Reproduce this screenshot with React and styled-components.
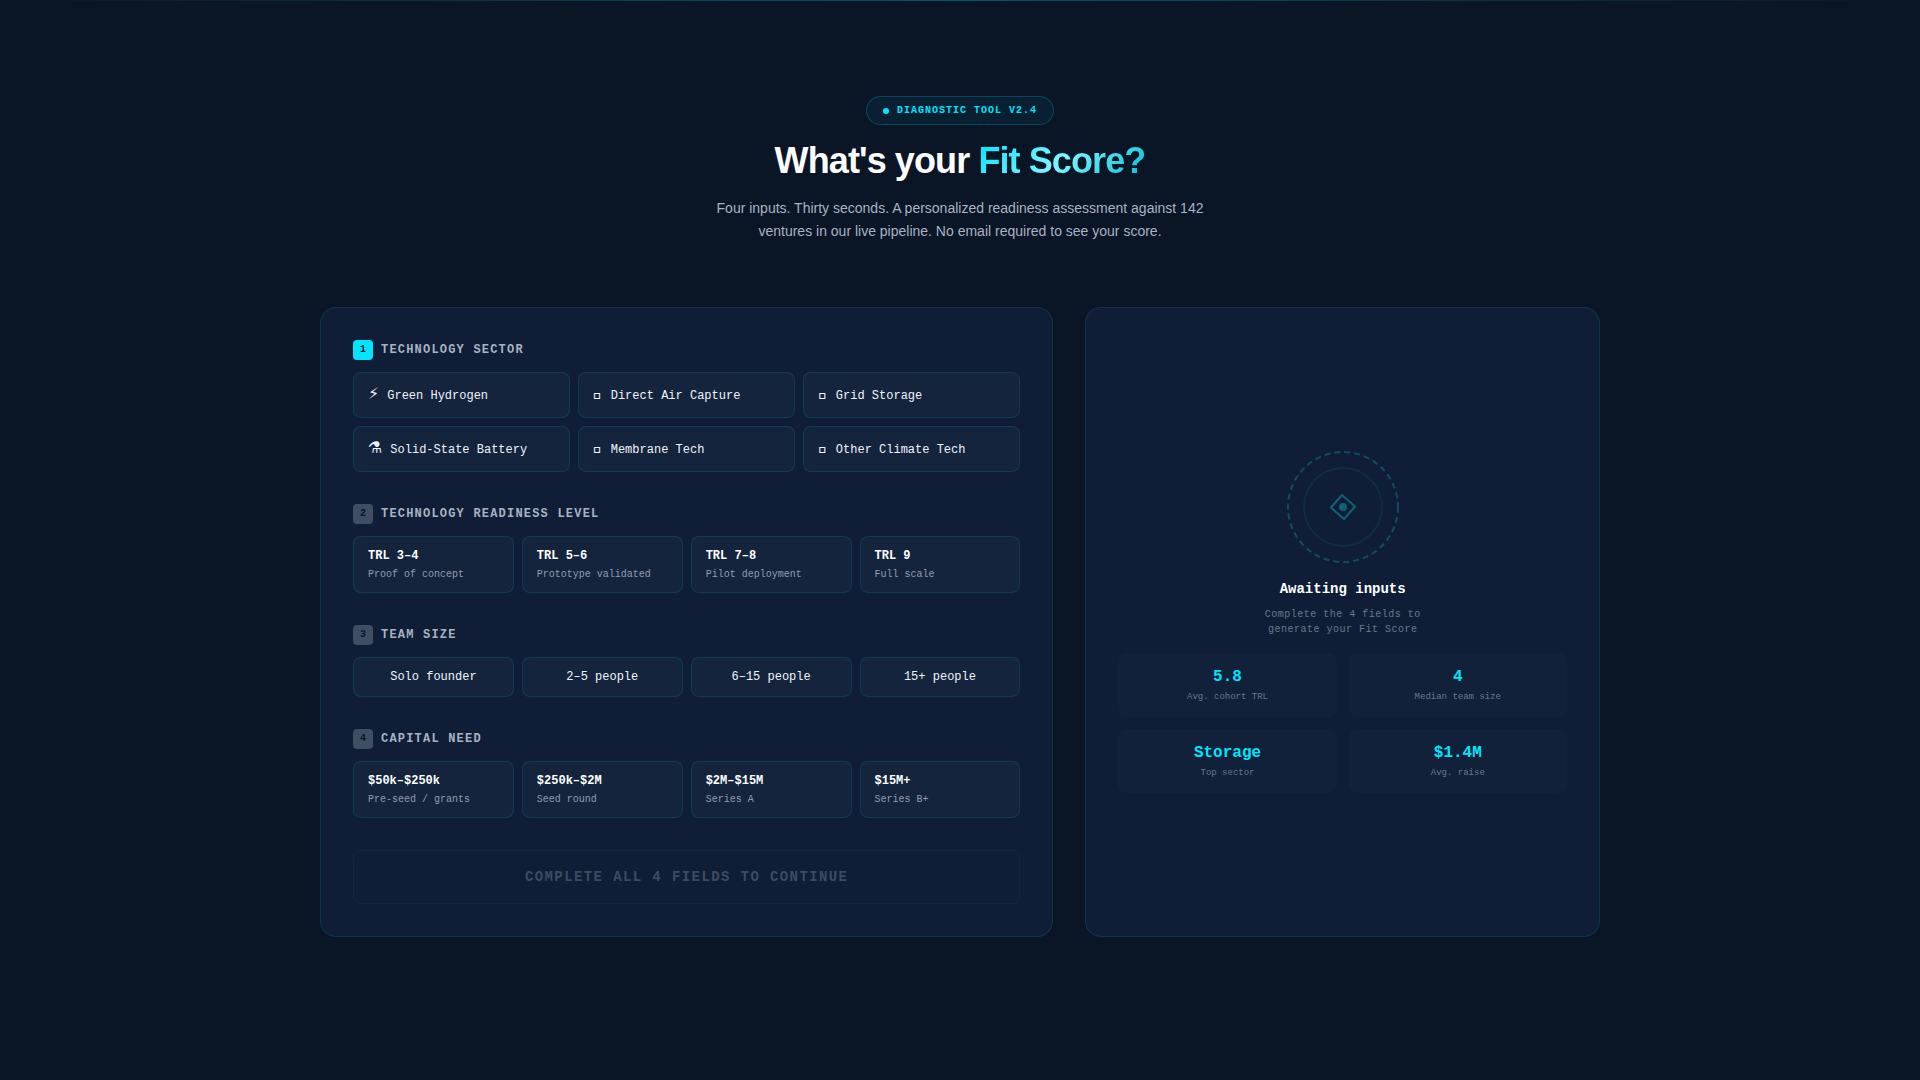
import React, { useState } from "react";
import styled, { createGlobalStyle, css } from "styled-components";

const mono = '"Liberation Mono", monospace';
const sans = '"Liberation Sans", sans-serif';
const symbols = '"Liberation Mono", "DejaVu Sans", sans-serif';

const GlobalStyle = createGlobalStyle`
  *, *::before, *::after { box-sizing: border-box; }
  body {
    margin: 0;
    background: #0a1526;
    color: #fff;
    font-family: ${sans};
  }
`;

const Page = styled.main`
  min-height: 100vh;
  padding: 0 24px 96px;
`;

const TopLine = styled.div`
  height: 1px;
  margin: 0 -24px 95px;
  background: linear-gradient(90deg, transparent, rgba(0, 229, 255, 0.3), transparent);
`;

const Header = styled.header`
  display: flex;
  flex-direction: column;
  align-items: center;
  text-align: center;
  margin-bottom: 64px;
`;

const Badge = styled.div`
  display: flex;
  align-items: center;
  gap: 8px;
  padding: 8px 16px;
  margin-bottom: 16px;
  border: 1px solid rgba(0, 229, 255, 0.2);
  border-radius: 20px;
  background: rgba(0, 229, 255, 0.06);
  color: #00e5ff;
  font: 700 10px/11px ${mono};
  letter-spacing: 0.1em;
  text-transform: uppercase;
`;

const Dot = styled.span`
  width: 6px;
  height: 6px;
  border-radius: 50%;
  background: #00e5ff;
`;

const Title = styled.h1`
  margin: 0 0 16px;
  font-size: 36px;
  line-height: 40px;
  font-weight: 700;
  letter-spacing: -0.025em;
`;

const Accent = styled.span`
  background: linear-gradient(135deg, #00e5ff 0%, #7ff5ff 50%, #00b8d4 100%);
  background-clip: text;
  color: transparent;
`;

const Lead = styled.p`
  margin: 0;
  max-width: 520px;
  font-size: 14px;
  line-height: 23px;
  color: #a8b3c2;
`;

const Columns = styled.div`
  display: grid;
  grid-template-columns: 1.425fr 1fr;
  gap: 32px;
  max-width: 1280px;
  margin: 0 auto;
`;

const panel = css`
  border: 1px solid rgba(0, 229, 255, 0.12);
  border-radius: 16px;
  padding: 32px;
  background: #0f1e36;
`;

const FormPanel = styled.form`
  ${panel}
  display: flex;
  flex-direction: column;
  gap: 32px;
`;

const ResultPanel = styled.section`
  ${panel}
  display: flex;
  flex-direction: column;
  align-items: center;
  justify-content: center;
  text-align: center;
  font-family: ${mono};
`;

const StepHead = styled.div`
  display: flex;
  align-items: center;
  gap: 8px;
  margin-bottom: 12px;
`;

const StepNumber = styled.span`
  width: 20px;
  height: 20px;
  border-radius: 4px;
  background: ${(p) => (p.$active ? "#00e5ff" : "#3f4e63")};
  color: #0a1628;
  font: 700 10px/20px ${mono};
  text-align: center;
`;

const StepLabel = styled.h2`
  margin: 0;
  font: 700 12px/20px ${mono};
  letter-spacing: 0.1em;
  text-transform: uppercase;
  color: #a8b3c2;
`;

const Options = styled.div`
  display: grid;
  grid-template-columns: repeat(${(p) => p.$columns}, minmax(0, 1fr));
  gap: 8px;
`;

const Option = styled.button`
  border: 1px solid ${(p) => (p.$selected ? "#00e5ff" : "rgba(0, 229, 255, 0.12)")};
  border-radius: 8px;
  background: #14243d;
  padding: 12px 14px;
  color: #f0f4fa;
  font: 400 12px/14px ${mono};
  text-align: ${(p) => (p.$center ? "center" : "left")};
  cursor: pointer;
`;

const OptionIcon = styled.span`
  margin-right: 8px;
  font-family: ${symbols};
  font-size: 16px;
  line-height: 20px;
`;

const OptionTitle = styled.span`
  display: block;
  margin-bottom: 6px;
  color: #fff;
  font-weight: 700;
  line-height: 14px;
`;

const OptionNote = styled.span`
  display: block;
  color: #929db0;
  font-size: 10px;
  line-height: 11px;
`;

const Submit = styled.button`
  border: 1px solid rgba(255, 255, 255, 0.03);
  border-radius: 8px;
  background: #0f1e37;
  padding: 18px;
  color: #3d4b62;
  font: 700 14px/16px ${mono};
  letter-spacing: 0.1em;
  text-transform: uppercase;
`;

const Dial = styled.svg`
  display: block;
  width: 112px;
  height: 112px;
  margin-bottom: 16px;
`;

const WaitTitle = styled.h2`
  margin: 0 0 8px;
  font-size: 14px;
  line-height: 20px;
`;

const WaitText = styled.p`
  margin: 0 0 16px;
  max-width: 180px;
  color: #6b778b;
  font-size: 10px;
  line-height: 15px;
  letter-spacing: 0.05em;
`;

const Stats = styled.dl`
  display: grid;
  grid-template-columns: 1fr 1fr;
  gap: 12px;
  width: 100%;
  margin: 0;
`;

const Stat = styled.div`
  display: flex;
  flex-direction: column-reverse;
  gap: 4px;
  padding: 14px 12px;
  border-radius: 8px;
  background: #11213a;
`;

const StatLabel = styled.dt`
  color: #6b778b;
  font-size: 9px;
  line-height: 12px;
`;

const StatValue = styled.dd`
  margin: 0;
  color: #00e5ff;
  font-size: 16px;
  line-height: 20px;
  font-weight: 700;
`;

const steps = [
  {
    label: "Technology Sector",
    columns: 3,
    options: [
      { icon: "⚡", text: "Green Hydrogen" },
      { icon: "\uE000", text: "Direct Air Capture" },
      { icon: "\uE000", text: "Grid Storage" },
      { icon: "⚗", text: "Solid-State Battery" },
      { icon: "\uE000", text: "Membrane Tech" },
      { icon: "\uE000", text: "Other Climate Tech" },
    ],
  },
  {
    label: "Technology Readiness Level",
    columns: 4,
    options: [
      { title: "TRL 3–4", note: "Proof of concept" },
      { title: "TRL 5–6", note: "Prototype validated" },
      { title: "TRL 7–8", note: "Pilot deployment" },
      { title: "TRL 9", note: "Full scale" },
    ],
  },
  {
    label: "Team Size",
    columns: 4,
    center: true,
    options: [
      { text: "Solo founder" },
      { text: "2–5 people" },
      { text: "6–15 people" },
      { text: "15+ people" },
    ],
  },
  {
    label: "Capital Need",
    columns: 4,
    options: [
      { title: "$50k–$250k", note: "Pre-seed / grants" },
      { title: "$250k–$2M", note: "Seed round" },
      { title: "$2M–$15M", note: "Series A" },
      { title: "$15M+", note: "Series B+" },
    ],
  },
];

const stats = [
  ["5.8", "Avg. cohort TRL"],
  ["4", "Median team size"],
  ["Storage", "Top sector"],
  ["$1.4M", "Avg. raise"],
];

export default function App() {
  const [picked, setPicked] = useState({});
  const done = Object.keys(picked).length;

  return (
    <>
      <GlobalStyle />
      <Page>
        <TopLine />
        <Header>
          <Badge>
            <Dot />
            Diagnostic Tool v2.4
          </Badge>
          <Title>
            What's your <Accent>Fit Score?</Accent>
          </Title>
          <Lead>
            Four inputs. Thirty seconds. A personalized readiness assessment against 142
            ventures in our live pipeline. No email required to see your score.
          </Lead>
        </Header>
        <Columns>
          <FormPanel onSubmit={(e) => e.preventDefault()}>
            {steps.map((step, s) => (
              <div key={step.label} role="group" aria-labelledby={`step-${s}`}>
                <StepHead>
                  <StepNumber $active={s <= done}>{s + 1}</StepNumber>
                  <StepLabel id={`step-${s}`}>{step.label}</StepLabel>
                </StepHead>
                <Options $columns={step.columns}>
                  {step.options.map((option, o) => (
                    <Option
                      key={o}
                      type="button"
                      $center={step.center}
                      $selected={picked[s] === o}
                      aria-pressed={picked[s] === o}
                      onClick={() => setPicked({ ...picked, [s]: o })}
                    >
                      {option.icon && <OptionIcon aria-hidden="true">{option.icon}</OptionIcon>}
                      {option.text}
                      {option.title && <OptionTitle>{option.title}</OptionTitle>}
                      {option.note && <OptionNote>{option.note}</OptionNote>}
                    </Option>
                  ))}
                </Options>
              </div>
            ))}
            <Submit type="submit" disabled={done < 4}>
              Complete all 4 fields to continue
            </Submit>
          </FormPanel>
          <ResultPanel>
            <Dial viewBox="0 0 112 112" fill="none" aria-hidden="true">
              <circle cx="56" cy="56" r="55" stroke="#114d62" strokeWidth="2" strokeDasharray="6 4" />
              <circle cx="56" cy="56" r="39" stroke="#102b43" strokeWidth="2" />
              <path d="M55 44 L68 55.500 L57 68 L44 56.500 Z" stroke="#0e6377" strokeWidth="2" />
              <circle cx="56" cy="56" r="4" fill="#0e6377" />
            </Dial>
            <WaitTitle>Awaiting inputs</WaitTitle>
            <WaitText>Complete the 4 fields to generate your Fit Score</WaitText>
            <Stats>
              {stats.map(([value, label]) => (
                <Stat key={label}>
                  <StatLabel>{label}</StatLabel>
                  <StatValue>{value}</StatValue>
                </Stat>
              ))}
            </Stats>
          </ResultPanel>
        </Columns>
      </Page>
    </>
  );
}
